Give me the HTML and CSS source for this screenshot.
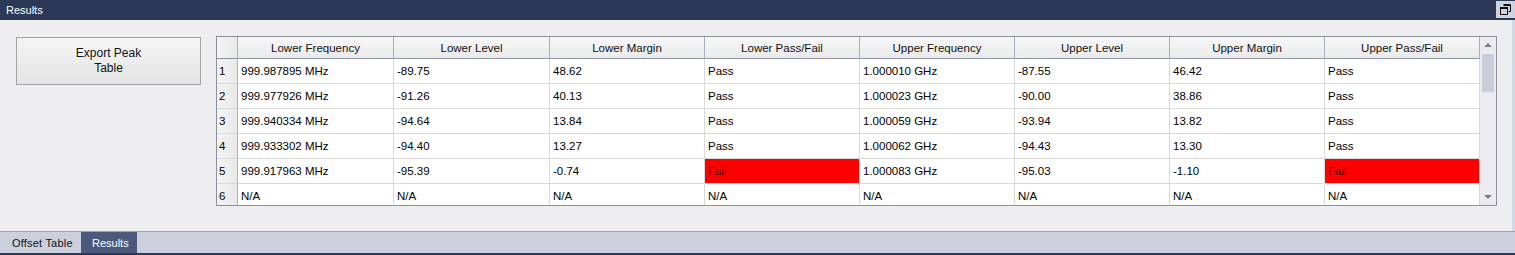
FILE: index.html
```html
<!DOCTYPE html>
<html>
<head>
<meta charset="utf-8">
<link rel="stylesheet" href="styles.css">
</head>
<body>
<div class="app">
  <div class="titlebar">
    <span class="title">Results</span>
    <span class="restore">
      <svg width="11" height="11" viewBox="0 0 11 11"><path d="M3.5 0.5h7v7h-2" fill="none" stroke="#111" stroke-width="1"/><path d="M3.5 1.5h7" stroke="#111" stroke-width="1"/><rect x="0.5" y="3.5" width="7" height="7" fill="none" stroke="#111" stroke-width="1"/><path d="M0.5 4.5h7" stroke="#111" stroke-width="1"/></svg>
    </span>
  </div>
  <div class="content">
    <div class="main">
      <button class="export">Export Peak<br>Table</button>
      <div class="tablebox">
        <div class="grid">
          <div class="hd rn"></div>
          <div class="hd">Lower Frequency</div>
          <div class="hd">Lower Level</div>
          <div class="hd">Lower Margin</div>
          <div class="hd">Lower Pass/Fail</div>
          <div class="hd">Upper Frequency</div>
          <div class="hd">Upper Level</div>
          <div class="hd">Upper Margin</div>
          <div class="hd">Upper Pass/Fail</div>

          <div class="rn">1</div><div class="c">999.987895 MHz</div><div class="c">-89.75</div><div class="c">48.62</div><div class="c">Pass</div><div class="c">1.000010 GHz</div><div class="c">-87.55</div><div class="c">46.42</div><div class="c">Pass</div>
          <div class="rn">2</div><div class="c">999.977926 MHz</div><div class="c">-91.26</div><div class="c">40.13</div><div class="c">Pass</div><div class="c">1.000023 GHz</div><div class="c">-90.00</div><div class="c">38.86</div><div class="c">Pass</div>
          <div class="rn">3</div><div class="c">999.940334 MHz</div><div class="c">-94.64</div><div class="c">13.84</div><div class="c">Pass</div><div class="c">1.000059 GHz</div><div class="c">-93.94</div><div class="c">13.82</div><div class="c">Pass</div>
          <div class="rn">4</div><div class="c">999.933302 MHz</div><div class="c">-94.40</div><div class="c">13.27</div><div class="c">Pass</div><div class="c">1.000062 GHz</div><div class="c">-94.43</div><div class="c">13.30</div><div class="c">Pass</div>
          <div class="rn">5</div><div class="c">999.917963 MHz</div><div class="c">-95.39</div><div class="c">-0.74</div><div class="c fail">Fail</div><div class="c">1.000083 GHz</div><div class="c">-95.03</div><div class="c">-1.10</div><div class="c fail">Fail</div>
          <div class="rn">6</div><div class="c">N/A</div><div class="c">N/A</div><div class="c">N/A</div><div class="c">N/A</div><div class="c">N/A</div><div class="c">N/A</div><div class="c">N/A</div><div class="c">N/A</div>
        </div>
        <div class="scrollbar">
          <span class="arrow up"></span>
          <span class="thumb"></span>
          <span class="spacer"></span>
          <span class="arrow down"></span>
        </div>
      </div>
    </div>
    <div class="edge"></div>
  </div>
  <div class="tabs">
    <span class="tab">Offset Table</span>
    <span class="tab active">Results</span>
  </div>
</div>
</body>
</html>
```

FILE: styles.css
```css
* { box-sizing: border-box; }
html, body { margin: 0; padding: 0; }
body {
  width: 1515px;
  height: 255px;
  overflow: hidden;
  font-family: "Liberation Sans", Arial, sans-serif;
  background: #eeeef1;
}
.app { display: flex; flex-direction: column; height: 255px; }

.titlebar {
  height: 20px;
  background: #293956;
  color: #fff;
  display: flex;
  align-items: center;
  justify-content: space-between;
  padding-left: 6px;
}
.title { font-size: 11px; }
.restore {
  width: 19px;
  height: 17px;
  margin-top: -1px;
  background: #cfd3de;
  display: flex;
  align-items: center;
  justify-content: center;
}

.content {
  height: 211px;
  display: flex;
}
.main {
  flex: 1;
  display: flex;
  align-items: flex-start;
  padding: 16px 0 0 16px;
}
.edge { width: 3px; background: #d3d8e5; }

.export {
  width: 185px;
  height: 48px;
  margin-top: 1px;
  border: 1px solid #a3a3a3;
  background: linear-gradient(#f4f4f4, #e4e4e4);
  font-family: "Liberation Sans", Arial, sans-serif;
  font-size: 12px;
  line-height: 15px;
  color: #111;
  padding: 0;
}

.tablebox {
  margin-left: 15px;
  display: flex;
  border: 1px solid #8b909b;
  height: 170px;
  background: #fff;
}
.grid {
  display: grid;
  grid-template-columns: 21px 156px 156px 155px 155px 155px 155px 155px 155px;
  grid-template-rows: 22px repeat(6, 25px);
  height: 168px;
  overflow: hidden;
  font-size: 11.5px;
  color: #000;
}
.grid > div {
  display: flex;
  align-items: center;
  white-space: nowrap;
  border-right: 1px solid #d9d9d9;
  border-bottom: 1px solid #d9d9d9;
}
.grid .hd {
  justify-content: center;
  background: linear-gradient(#f7f7f7, #eaeaea);
  border-right: 1px solid #a7aebd;
  border-bottom: 1px solid #8c94a5;
  color: #111;
}
.grid .rn {
  background: linear-gradient(90deg, #f3f3f3, #e9e9e9);
  border-right: 1px solid #a7aebd;
  padding-left: 2px;
}
.grid .hd.rn { padding-left: 0; border-bottom: 1px solid #8c94a5; }
.grid .c { padding-left: 3px; }
.grid .c.fail { background: #ff0000; color: #4a0000; }

.scrollbar {
  width: 16px;
  background: #ebebef;
  display: flex;
  flex-direction: column;
  align-items: center;
}
.arrow {
  width: 0; height: 0;
  border-left: 4px solid transparent;
  border-right: 4px solid transparent;
}
.arrow.up { border-bottom: 4px solid #7d7d7d; margin-top: 6px; }
.arrow.down { border-top: 4px solid #7d7d7d; margin-bottom: 6px; }
.thumb {
  width: 12px;
  height: 38px;
  margin-top: 7px;
  background: #c9ccd9;
}
.spacer { flex: 1; }

.tabs {
  height: 24px;
  border-top: 1px solid #9d9fa9;
  border-bottom: 2px solid #293956;
  background: #cccfdc;
  display: flex;
  font-size: 11px;
}
.tab {
  display: flex;
  align-items: center;
  width: 81px;
  padding-left: 12px;
  color: #111;
  letter-spacing: 0.2px;
}
.tab.active {
  width: 56px;
  background: #4b5a7c;
  color: #fff;
  padding-left: 11px;
  letter-spacing: 0;
}
```
